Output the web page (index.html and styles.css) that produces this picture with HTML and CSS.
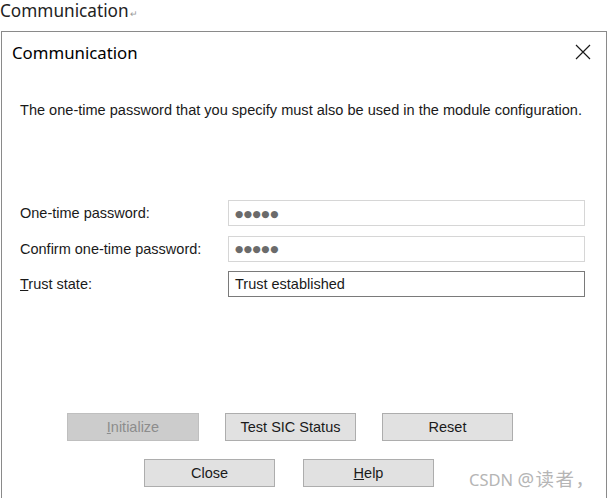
FILE: index.html
```html
<!DOCTYPE html>
<html>
<head>
<meta charset="utf-8">
<link rel="stylesheet" href="styles.css">
</head>
<body>
<div class="doc-title">Communication<span class="ret">↵</span></div>
<div class="dialog">
  <div class="header">
    <span class="title">Communication</span>
    <svg class="close" width="16" height="16" viewBox="0 0 16 16"><path d="M1 1L15 15M15 1L1 15" stroke="#1a1a1a" stroke-width="1.2" fill="none"/></svg>
  </div>
  <p class="desc">The one-time password that you specify must also be used in the module configuration.</p>
  <div class="form">
    <label class="lbl">One-time password:</label>
    <div class="field soft"><span class="dots">●●●●●</span></div>
    <label class="lbl">Confirm one-time password:</label>
    <div class="field soft"><span class="dots">●●●●●</span></div>
    <label class="lbl"><u>T</u>rust state:</label>
    <div class="field hard">Trust established</div>
  </div>
  <div class="btn-row row1">
    <button class="btn wide disabled"><u>I</u>nitialize</button>
    <button class="btn">Test SIC Status</button>
    <button class="btn">Reset</button>
  </div>
  <div class="btn-row row2">
    <button class="btn">Close</button>
    <button class="btn"><u>H</u>elp</button>
  </div>
  <div class="watermark">CSDN <span class="wm-cjk">@读者，</span></div>
</div>
</body>
</html>
```
FILE: styles.css
```css
html, body {
  margin: 0;
  padding: 0;
  background: #fff;
}
body {
  width: 608px;
  height: 498px;
  overflow: hidden;
  font-family: "Liberation Sans", Arial, sans-serif;
  color: #1a1a1a;
}
.doc-title {
  height: 22px;
  line-height: 21px;
  font-family: "Noto Sans", sans-serif;
  font-size: 17.2px;
  color: #222;
  white-space: nowrap;
}
.ret {
  font-size: 9px;
  color: #999;
  margin-left: 1px;
}
.dialog {
  position: relative;
  margin: 9px 0 0 1px;
  width: 604px;
  height: 480px;
  border: 1px solid #8a8a8a;
  border-bottom: none;
  box-sizing: content-box;
}
.header {
  height: 40px;
  display: flex;
  align-items: center;
  justify-content: space-between;
  padding: 0 15px 0 10px;
}
.title {
  font-family: "Noto Sans", sans-serif;
  font-size: 16.8px;
  color: #000;
}
.close {
  display: block;
}
.desc {
  margin: 28px 0 0 18px;
  font-size: 14.55px;
  line-height: 20px;
  color: #1a1a1a;
  white-space: nowrap;
}
.form {
  margin: 80px 0 0 18px;
  display: grid;
  grid-template-columns: 208px 357px;
  row-gap: 9.5px;
  align-items: center;
}
.lbl {
  font-size: 14.5px;
  color: #1a1a1a;
}
.field {
  height: 26px;
  box-sizing: border-box;
  display: flex;
  align-items: center;
  padding-left: 6px;
  font-size: 14.5px;
  color: #1a1a1a;
}
.soft {
  border: 1px solid #d6d6d6;
}
.hard {
  border: 1px solid #7a7a7a;
}
.dots {
  font-family: "DejaVu Sans", sans-serif;
  font-size: 9.5px;
  letter-spacing: 0.5px;
  color: #6b6b6b;
}
.btn-row {
  display: flex;
}
.row1 {
  margin-top: 116px;
  padding-left: 65px;
  gap: 26px;
}
.row2 {
  margin-top: 18px;
  padding-left: 142px;
  gap: 28px;
}
.btn {
  width: 131px;
  height: 28px;
  margin: 0;
  padding: 0;
  box-sizing: border-box;
  background: #e1e1e1;
  border: 1px solid #adadad;
  font-family: "Liberation Sans", Arial, sans-serif;
  font-size: 14.5px;
  color: #1a1a1a;
}
.btn.wide {
  width: 132px;
}
.btn.disabled {
  background: #cccccc;
  border-color: #bfbfbf;
  color: #8c8c8c;
}
.watermark {
  position: absolute;
  left: 467px;
  top: 433px;
  font-family: "Noto Sans", "Noto Sans CJK SC", sans-serif;
  font-size: 16.5px;
  color: #b5b5b5;
  white-space: nowrap;
}
.wm-cjk {
  font-size: 18.5px;
  letter-spacing: 1.5px;
}
```
